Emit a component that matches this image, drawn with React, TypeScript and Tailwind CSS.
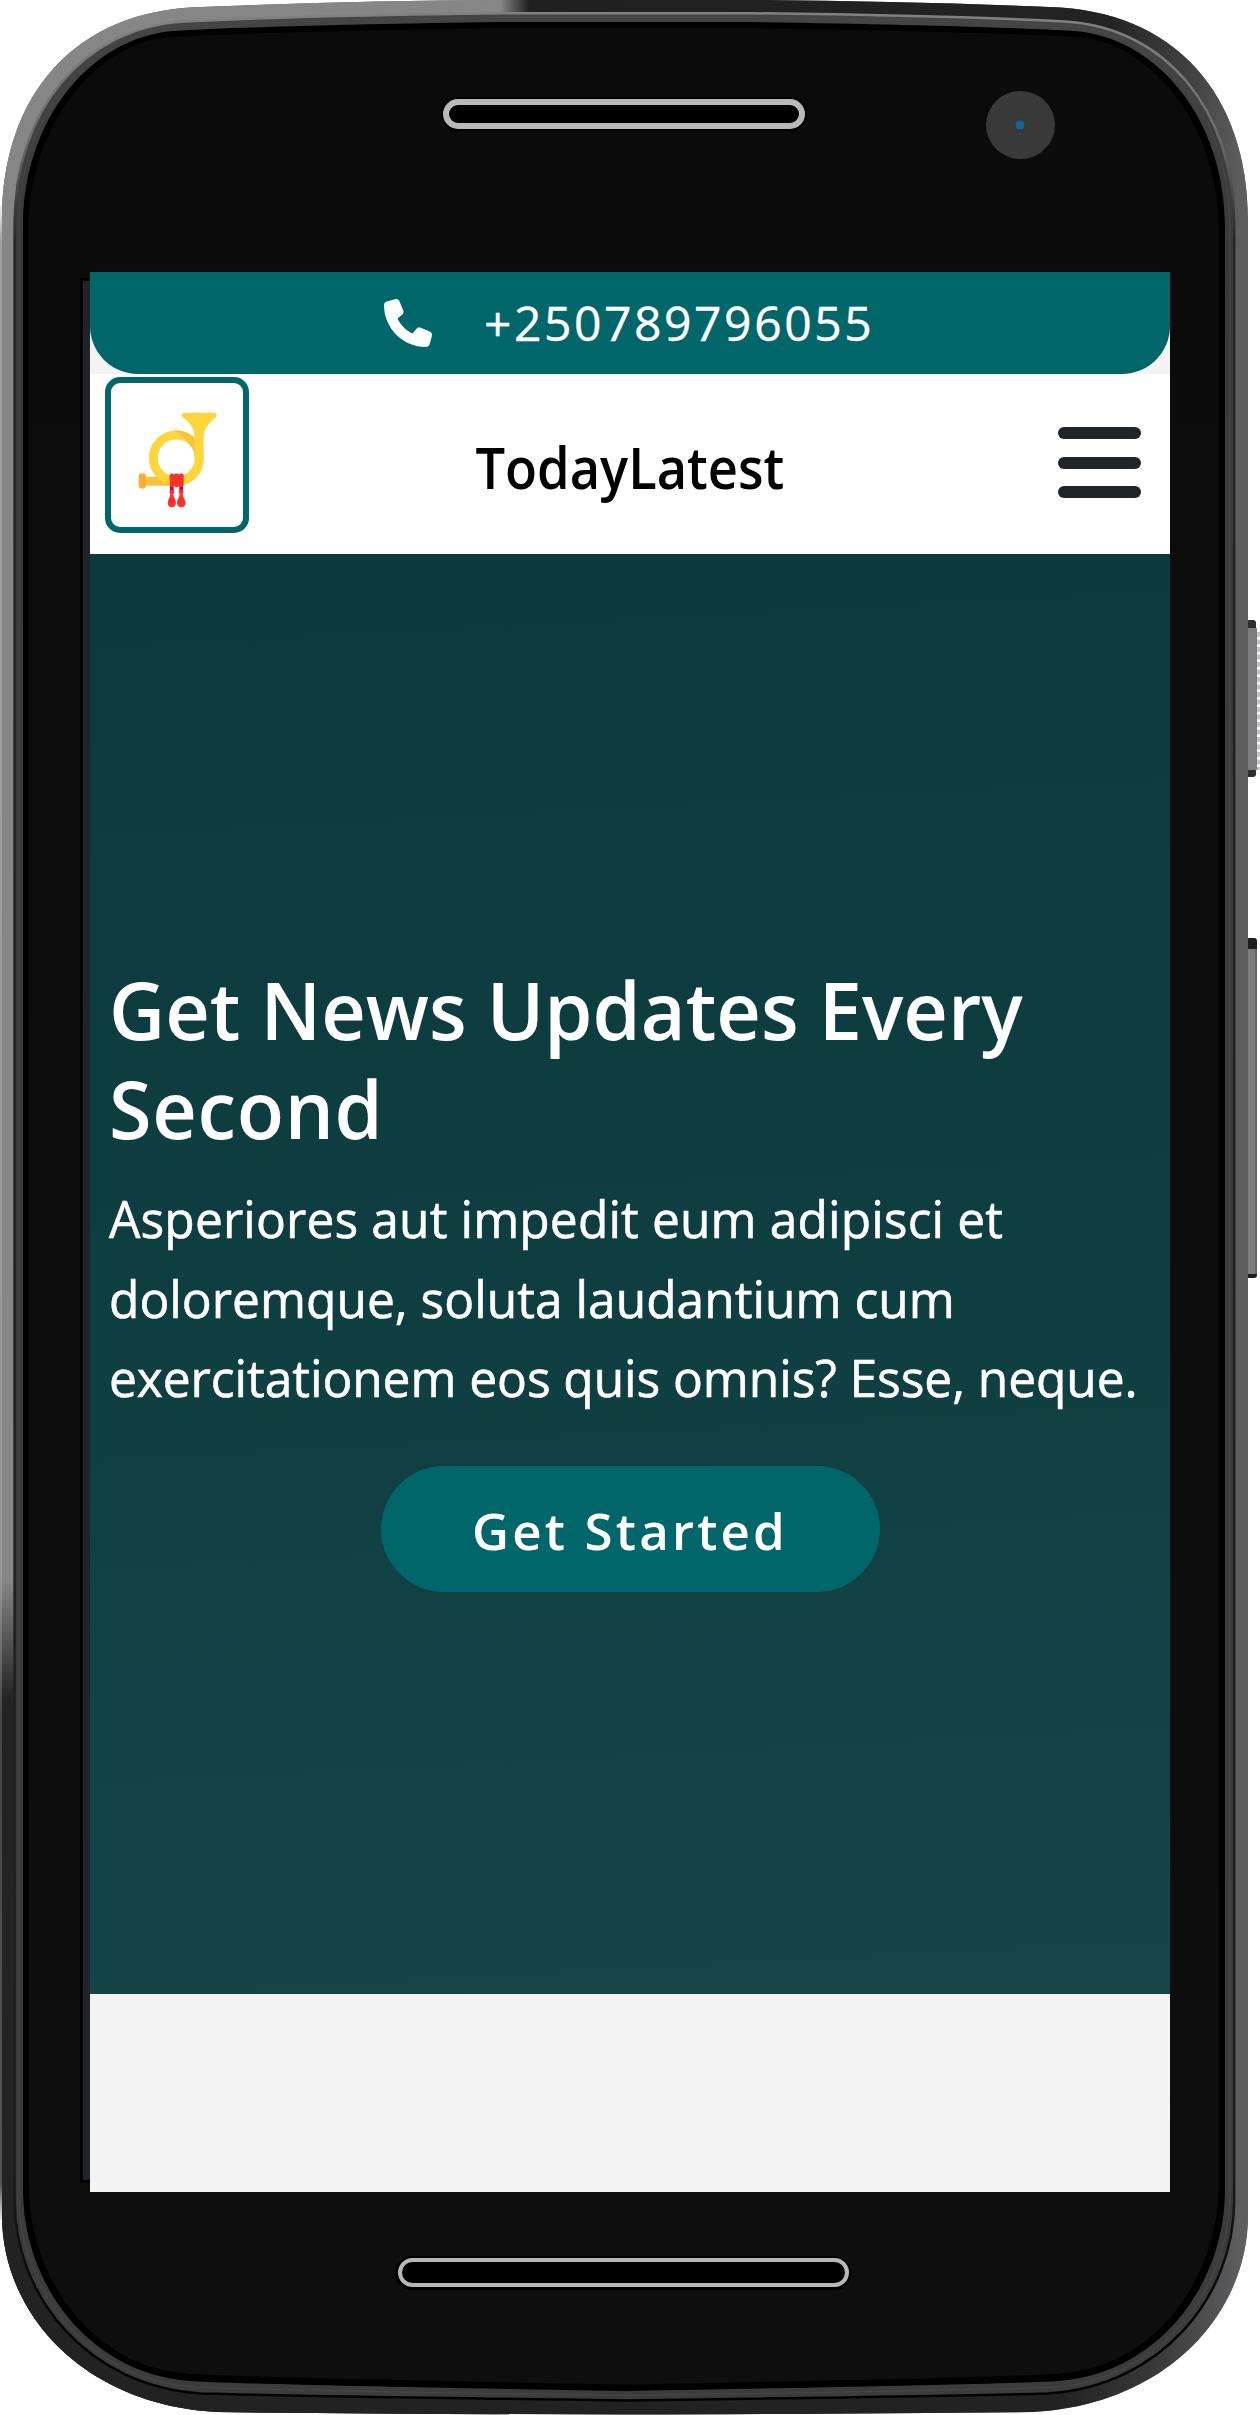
import { FaPhone } from "react-icons/fa6";

type Shape = number[];

// Top-left and bottom-left corner coordinates of the case edge and of the glass edge.
const OUTER: Shape = [2, 220, 2, 95, 75, 10, 201, 7, 301, 3, 402, 0.5, 500, 0, 2, 2215, 2, 2315, 85, 2405, 217, 2412, 402, 2414, 625, 2414.5];
const INNER: Shape = [23, 227, 23, 120, 90, 38, 173, 31, 241, 27, 361, 24, 500, 22, 23, 2190, 23, 2285, 90, 2374, 190, 2381, 225, 2384, 625, 2391];

function casePath(t: number) {
  const p = OUTER.map((v, i) => v + (INNER[i] - v) * t);
  const mirror = 1250 - 2 * t;
  const m = (x: number) => mirror - x;
  return [
    `M${p[0]} ${p[1]}C${p[2]} ${p[3]} ${p[4]} ${p[5]} ${p[6]} ${p[7]}`,
    `C${p[8]} ${p[9]} ${p[10]} ${p[11]} ${p[12]} ${p[13]}`,
    `L${m(p[12])} ${p[13]}C${m(p[10])} ${p[11]} ${m(p[8])} ${p[9]} ${m(p[6])} ${p[7]}`,
    `C${m(p[4])} ${p[5]} ${m(p[2])} ${p[3]} ${m(p[0])} ${p[1]}`,
    `L${m(p[14])} ${p[15]}C${m(p[16])} ${p[17]} ${m(p[18])} ${p[19]} ${m(p[20])} ${p[21]}`,
    `Q${m(p[22])} ${p[23]} ${p[24]} ${p[25]}Q${p[22]} ${p[23]} ${p[20]} ${p[21]}`,
    `C${p[18]} ${p[19]} ${p[16]} ${p[17]} ${p[14]} ${p[15]}Z`,
  ].join("");
}

function PhoneCase() {
  return (
    <svg className="absolute inset-0 h-[2415px] w-[1260px]" viewBox="0 0 1260 2415" aria-hidden="true">
      <defs>
        <clipPath id="case"><path d={casePath(0)} /></clipPath>
        <linearGradient id="top" x1="0" x2="1260" y1="0" y2="0" gradientUnits="userSpaceOnUse">
          <stop offset="0.397" stopColor="#868686" />
          <stop offset="0.42" stopColor="#202020" />
          <stop offset="0.88" stopColor="#232323" />
          <stop offset="0.95" stopColor="#444" />
          <stop offset="0.985" stopColor="#5e5e5e" />
        </linearGradient>
        <linearGradient id="left" x1="0" x2="0" y1="1580" y2="1700" gradientUnits="userSpaceOnUse">
          <stop offset="0" stopColor="#868686" />
          <stop offset="0.5" stopColor="#555" />
          <stop offset="1" stopColor="#232323" />
        </linearGradient>
        <linearGradient id="rim" x1="0" x2="0" y1="200" y2="2225" gradientUnits="userSpaceOnUse">
          <stop offset="0" stopColor="#fff" />
          <stop offset="0.02" stopColor="#a0a0a0" />
          <stop offset="0.68" stopColor="#999" />
          <stop offset="0.75" stopColor="#444" />
          <stop offset="0.98" stopColor="#555" />
          <stop offset="1" stopColor="#fff" />
        </linearGradient>
        <linearGradient id="bottom" x1="0" x2="1260" y1="0" y2="0" gradientUnits="userSpaceOnUse">
          <stop offset="0.84" stopColor="#222" />
          <stop offset="0.92" stopColor="#3a3a3a" />
          <stop offset="0.975" stopColor="#58585a" />
          <stop offset="0.985" stopColor="#5e5e5e" />
        </linearGradient>
        <linearGradient id="band" x1="0" x2="0" y1="0" y2="2415" gradientUnits="userSpaceOnUse">
          <stop offset="0.01" stopColor="#444" />
          <stop offset="0.1" stopColor="#3a3a3a" />
          <stop offset="1" stopColor="#3c3c3c" />
        </linearGradient>
        <linearGradient id="edge" x1="0" x2="0" y1="0" y2="2415" gradientUnits="userSpaceOnUse">
          <stop offset="0.01" stopColor="#808080" />
          <stop offset="0.06" stopColor="#6a6a6a" />
          <stop offset="0.1" stopColor="#252525" />
          <stop offset="0.9" stopColor="#1c1c1c" />
          <stop offset="0.96" stopColor="#030303" />
        </linearGradient>
        <linearGradient id="glass" x1="0" x2="0" y1="0" y2="1">
          <stop offset="0" stopColor="#0b0b0b" />
          <stop offset="1" stopColor="#0e0e0e" />
        </linearGradient>
        <pattern id="ridges" width="3" height="7.5" y="632" patternUnits="userSpaceOnUse">
          <rect width="3" height="5" fill="#c4c4c4" />
        </pattern>
      </defs>

      <rect x="1246" y="620" width="10" height="157" rx="3" fill="#2e2e2e" />
      <rect x="1246" y="628" width="11" height="142" fill="#7c7c7e" />
      <rect x="1257" y="632" width="3" height="138" fill="url(#ridges)" />
      <rect x="1246" y="938" width="11" height="340" rx="3" fill="#1d1d1d" />
      <rect x="1246" y="949" width="11" height="325" fill="#7c7c7e" />
      <rect x="1255" y="949" width="2" height="325" fill="#636363" />

      <g clipPath="url(#case)">
        <rect width="1260" height="2415" fill="#5e5e5e" />
        <rect width="1260" height="250" fill="url(#top)" />
        <rect y="240" width="500" height="2175" fill="url(#left)" />
        <rect y="2200" width="1260" height="215" fill="url(#bottom)" />
      </g>
      <rect y="205" width="2" height="2015" fill="url(#rim)" />
      <path d={casePath(0.6)} fill="url(#band)" stroke="url(#edge)" strokeWidth="2.5" />
      <path d={casePath(0.8)} fill="none" stroke="#484848" strokeWidth="1" />
      <path d={casePath(1)} fill="#000" />
      <path d={casePath(1.27)} fill="url(#glass)" />

      <rect x="80" y="278" width="12" height="1905" fill="#000" />
      <rect x="83" y="281" width="10" height="1899" fill="#20232a" />

      <rect x="441" y="97" width="366" height="34" rx="16" fill="#000" />
      <rect x="446" y="102" width="356" height="24" rx="12" fill="#000" stroke="#bab8b9" strokeWidth="6" />
      <ellipse cx="1020.5" cy="125" rx="34.5" ry="34" fill="#393939" />
      <circle cx="1020" cy="125" r="7" fill="#30393c" />
      <circle cx="1020" cy="125" r="4.5" fill="#1f6188" />
      <rect x="395" y="2256" width="456" height="34" rx="16" fill="#000" />
      <rect x="400" y="2260" width="447" height="25" rx="12.5" fill="#000" stroke="#b8b8b8" strokeWidth="4" />
    </svg>
  );
}

function HornLogo() {
  return (
    <svg className="h-[113.33px] w-[83.33px]" viewBox="106 85 250 340" aria-hidden="true">
      <path d="M134 321H200L222 348H134Z" fill="#f9c23c" />
      <rect x="117" y="311" width="22" height="46" rx="10" fill="#ffad30" />
      <circle cx="230" cy="265" r="69" fill="none" stroke="#fdd53c" strokeWidth="27" />
      <path d="M222 183C246 181 268 189 286 205V262C284 240 271 222 258 212C252 198 238 188 222 183Z" fill="#f9c23c" />
      <path d="M312 266V204C312 178 328 158 347 145C354 138 351 129 343 129H255C247 129 244 138 251 145C270 158 285 178 285 204V266C285 300 262 320 236 321V348C280 346 312 312 312 266Z" fill="#fdd53c" />
      <path d="M211 345H222V364H211ZM239 345H250V364H239Z" fill="#c4005a" />
      <path d="M210 317C210 310 221 310 223 315C225 310 236 310 238 315C240 310 252 310 252 317V347C251 354 240 354 238 348C236 354 226 354 224 348C221 354 210 354 210 347Z" fill="#fb312e" />
      <path d="M209 366C209 358 224 358 224 366C223 370 221 371 221 374C222 384 229 391 229 400C229 417 204 417 204 400C204 391 211 384 212 374C212 371 210 370 209 366Z" fill="#fb312e" />
      <path d="M237 366C237 358 252 358 252 366C251 370 249 371 249 374C250 384 258 391 258 400C258 417 232 417 232 400C232 391 239 384 240 374C240 371 238 370 237 366Z" fill="#fb312e" />
    </svg>
  );
}

function Menu() {
  return (
    <button aria-label="Menu" className="mb-[3px] flex flex-col gap-[17.5px]">
      <span className="h-3 w-[83px] rounded-[6px] bg-[#212529]" />
      <span className="h-3 w-[83px] rounded-[6px] bg-[#212529]" />
      <span className="h-3 w-[83px] rounded-[6px] bg-[#212529]" />
    </button>
  );
}

export default function App() {
  return (
    <div className="relative h-[2415px] w-[1260px] overflow-hidden bg-white pt-[272px] pl-[90px] font-['Open_Sans',sans-serif]">
      <PhoneCase />
      <main className="relative h-[1920px] w-[1080px] overflow-hidden bg-[#f3f3f3]">
        <div className="flex h-[102px] items-center rounded-b-[48px] bg-[#01666a] pl-[294px] text-white">
          <FaPhone className="size-12" />
          <span className="ml-[52px] text-[48px] leading-none tracking-[2.57px] [-webkit-text-stroke:0.4px_white]">+250789796055</span>
        </div>

        <header className="grid h-[180px] grid-cols-[1fr_auto_1fr] items-center bg-white pr-[29px] pl-[15px]">
          <div className="mb-[18px] flex h-[156px] w-36 items-center justify-center rounded-[15px] border-6 border-[#01666a]">
            <HornLogo />
          </div>
          <h2 className="mt-[5px] ml-[14px] origin-center scale-x-[0.904] text-[58px] leading-none font-semibold text-black">TodayLatest</h2>
          <div className="flex justify-end">
            <Menu />
          </div>
        </header>

        <section className="flex h-[1440px] flex-col items-center bg-linear-[177deg,#0b393c,#0f3e41_50%,#154548] pt-[405px] text-white">
          <div className="w-full pl-[19px]">
            <h1 className="origin-left scale-x-[0.968] text-[80px] leading-[99px] font-semibold whitespace-nowrap">
              Get News Updates Every
              <br />
              <span className="tracking-[0.7px]">Second</span>
            </h1>
            <p className="mt-[21px] origin-left scale-x-[0.956] text-[52px] leading-[79.5px] whitespace-nowrap [-webkit-text-stroke:0.6px_white]">
              <span className="tracking-[0.12px]">Asperiores aut impedit eum adipisci et</span>
              <br />
              doloremque, soluta laudantium cum
              <br />
              <span className="tracking-[-0.08px]">exercitationem eos quis omnis? Esse, neque.</span>
            </p>
          </div>
          <button className="mt-[49px] h-[126px] w-[499px] rounded-full bg-[#01666a] pt-1 text-[51px] font-semibold tracking-[3.2px]">
            Get Started
          </button>
        </section>
      </main>
    </div>
  );
}
